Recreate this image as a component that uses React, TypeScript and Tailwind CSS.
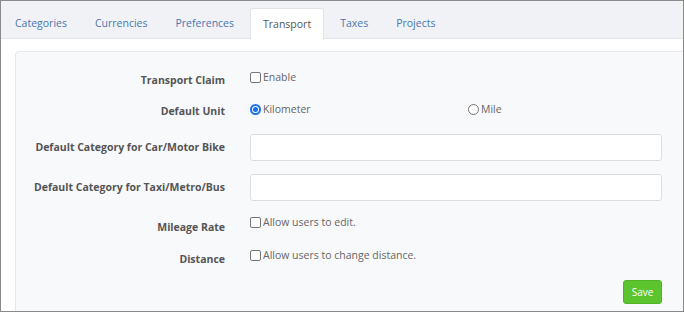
import React from "react";

const font = { fontFamily: '"Open Sans", "Noto Sans", sans-serif' };

function Tab({ label, active }: { label: string; active?: boolean }) {
  return active ? (
    <div className="mt-[7px] h-[32px] px-3 flex items-center bg-white border border-b-0 border-[#e1e4e8] rounded-t-[3px] text-[10.5px] text-[#555] -mb-px relative">
      {label}
    </div>
  ) : (
    <div className="mt-[7px] h-[31px] px-3 flex items-center text-[10.5px] text-[#4a76b0]">{label}</div>
  );
}

function Check({ text }: { text: string }) {
  return (
    <label className="flex items-center gap-[2px] text-[10.5px] leading-[15px] text-[#666]">
      <span className="w-[11px] h-[11px] border border-[#777] rounded-[2px] bg-white inline-block" />
      <span>{text}</span>
    </label>
  );
}

function Radio({ text, checked }: { text: string; checked?: boolean }) {
  return (
    <label className="flex items-center gap-[2px] text-[10.5px] leading-[15px] text-[#666]">
      {checked ? (
        <span className="w-[11px] h-[11px] rounded-full border-[2px] border-[#1a6ff0] bg-white flex items-center justify-center">
          <span className="w-[5px] h-[5px] rounded-full bg-[#1a6ff0]" />
        </span>
      ) : (
        <span className="w-[11px] h-[11px] rounded-full border border-[#777] bg-white inline-block" />
      )}
      <span>{text}</span>
    </label>
  );
}

function Row({
  label,
  children,
  h,
  labelPt,
  ctrlPt,
}: {
  label: string;
  children: React.ReactNode;
  h: string;
  labelPt: string;
  ctrlPt: string;
}) {
  return (
    <div className={`flex ${h}`}>
      <div className={`w-[209px] text-right text-[10.5px] leading-[16px] font-bold text-[#555] ${labelPt}`}>{label}</div>
      <div className={`ml-[25px] flex-1 ${ctrlPt}`}>{children}</div>
    </div>
  );
}

export default function App() {
  return (
    <div style={font} className="w-[684px] h-[312px] border border-[#8a8a8a] overflow-hidden bg-white flex flex-col">
      <div className="h-[38px] shrink-0 bg-[#f0f2f5] border-b border-[#e1e4e8] flex pl-[2px] gap-[4px]">
        <Tab label="Categories" />
        <Tab label="Currencies" />
        <Tab label="Preferences" />
        <Tab label="Transport" active />
        <Tab label="Taxes" />
        <Tab label="Projects" />
      </div>
      <div className="flex-1 pt-[12px] pl-[14px]">
        <div className="h-[280px] -mr-[6px] border border-[#e6e8eb] rounded-[4px] bg-[#f8f9fb] pt-[16px] pr-[26px]">
          <Row label="Transport Claim" h="h-[32px]" labelPt="pt-[4px]" ctrlPt="pt-[2px]">
            <Check text="Enable" />
          </Row>
          <Row label="Default Unit" h="h-[30px]" labelPt="pt-[3px]" ctrlPt="pt-[2px]">
            <div className="flex">
              <div className="w-[218px]">
                <Radio text="Kilometer" checked />
              </div>
              <Radio text="Mile" />
            </div>
          </Row>
          <Row label="Default Category for Car/Motor Bike" h="h-[40px]" labelPt="pt-[9px]" ctrlPt="pt-[4px]">
            <input className="block w-full h-[27px] bg-white border border-[#ddd] rounded-[3px] outline-none" />
          </Row>
          <Row label="Default Category for Taxi/Metro/Bus" h="h-[40px]" labelPt="pt-[9px]" ctrlPt="pt-[4px]">
            <input className="block w-full h-[27px] bg-white border border-[#ddd] rounded-[3px] outline-none" />
          </Row>
          <Row label="Mileage Rate" h="h-[33px]" labelPt="pt-[9px]" ctrlPt="pt-[5px]">
            <Check text="Allow users to edit." />
          </Row>
          <Row label="Distance" h="h-[30px]" labelPt="pt-[8px]" ctrlPt="pt-[5px]">
            <Check text="Allow users to change distance." />
          </Row>
          <div className="flex justify-end mt-[7px]">
            <button className="h-[24px] w-[39px] bg-[#5cc42f] border border-[#52b329] rounded-[3px] text-white text-[10px]">
              Save
            </button>
          </div>
        </div>
      </div>
    </div>
  );
}
